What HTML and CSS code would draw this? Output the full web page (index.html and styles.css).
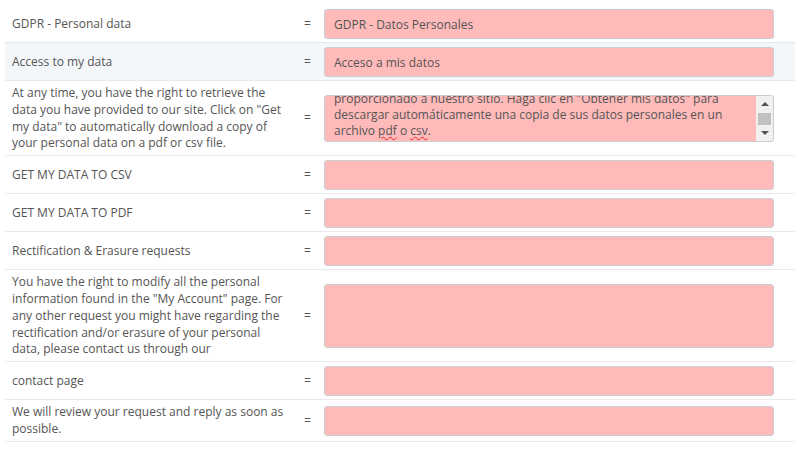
FILE: index.html
```html
<!DOCTYPE html>
<html lang="en">
<head>
  <meta charset="UTF-8" />
  <title>Translations - GDPR</title>
  <link rel="stylesheet" href="styles.css">
</head>
<body>
  <table class="trans">
    <tr>
      <td class="label">GDPR - Personal data</td>
      <td class="eq">=</td>
      <td class="field"><div class="input">GDPR - Datos Personales</div></td>
    </tr>
    <tr class="hover">
      <td class="label">Access to my data</td>
      <td class="eq">=</td>
      <td class="field"><div class="input">Acceso a mis datos</div></td>
    </tr>
    <tr>
      <td class="label">At any time, you have the right to retrieve the data you have provided to our site. Click on "Get my data" to automatically download a copy of your personal data on a pdf or csv file.</td>
      <td class="eq">=</td>
      <td class="field">
        <div class="textarea">
          <div class="ta-text">En cualquier momento, tiene derecho a recuperar los datos que ha proporcionado a nuestro sitio. Haga clic en "Obtener mis datos" para descargar automáticamente una copia de sus datos personales en un archivo <span class="typo">pdf</span> o <span class="typo">csv</span>.</div>
          <div class="scrollbar">
            <span class="arrow up"></span>
            <span class="thumb"></span>
            <span class="arrow down"></span>
          </div>
        </div>
      </td>
    </tr>
    <tr>
      <td class="label">GET MY DATA TO CSV</td>
      <td class="eq">=</td>
      <td class="field"><div class="input"></div></td>
    </tr>
    <tr>
      <td class="label">GET MY DATA TO PDF</td>
      <td class="eq">=</td>
      <td class="field"><div class="input"></div></td>
    </tr>
    <tr>
      <td class="label">Rectification &amp; Erasure requests</td>
      <td class="eq">=</td>
      <td class="field"><div class="input"></div></td>
    </tr>
    <tr>
      <td class="label">You have the right to modify all the personal information found in the "My Account" page. For any other request you might have regarding the rectification and/or erasure of your personal data, please contact us through our</td>
      <td class="eq">=</td>
      <td class="field"><div class="textarea empty"></div></td>
    </tr>
    <tr>
      <td class="label">contact page</td>
      <td class="eq">=</td>
      <td class="field"><div class="input"></div></td>
    </tr>
    <tr>
      <td class="label">We will review your request and reply as soon as possible.</td>
      <td class="eq">=</td>
      <td class="field"><div class="input"></div></td>
    </tr>
  </table>
</body>
</html>
```

FILE: styles.css
```css
body { margin: 0; padding: 5px 15px 0 5px; background: #fff; font-family: "Open Sans", "Liberation Sans", sans-serif; font-size: 12px; color: #555; }
.trans { width: 790px; border-collapse: collapse; table-layout: fixed; }
.trans td { border-bottom: 1px solid #e6eaed; padding: 4px 0 3px; line-height: 16.8px; vertical-align: middle; }
.trans tr.hover td { background: #f4f7fa; }
.trans td.label { width: 276px; padding-left: 7px; padding-right: 7px; }
.trans td.eq { width: 25px; text-align: center; }
.trans td.field { padding-left: 4px; }
.input { box-sizing: border-box; width: 450px; height: 30px; padding: 6px 9px; background: #ffbaba; border: 1px solid #c8d0d6; border-radius: 3px; line-height: 17px; }
.textarea { position: relative; box-sizing: border-box; width: 450px; height: 47px; background: #ffbaba; border: 1px solid #c8d0d6; border-radius: 3px; overflow: hidden; }
.textarea.empty { height: 64px; }
.ta-text { position: absolute; left: 0; bottom: 0; box-sizing: border-box; width: 432px; padding: 0 4px 2px 9px; line-height: 16px; }
.typo { text-decoration: underline wavy #e22; text-decoration-thickness: 1px; text-underline-offset: 1px; }
.scrollbar { position: absolute; top: 0; right: 0; bottom: 0; width: 17px; background: #f1f1f1; }
.thumb { position: absolute; left: 2px; right: 2px; top: 17px; height: 12px; background: #c1c1c1; }
.arrow { position: absolute; left: 5px; width: 0; height: 0; border-left: 4px solid transparent; border-right: 4px solid transparent; }
.arrow.up { top: 6px; border-bottom: 4px solid #505050; }
.arrow.down { bottom: 6px; border-top: 4px solid #505050; }
```
